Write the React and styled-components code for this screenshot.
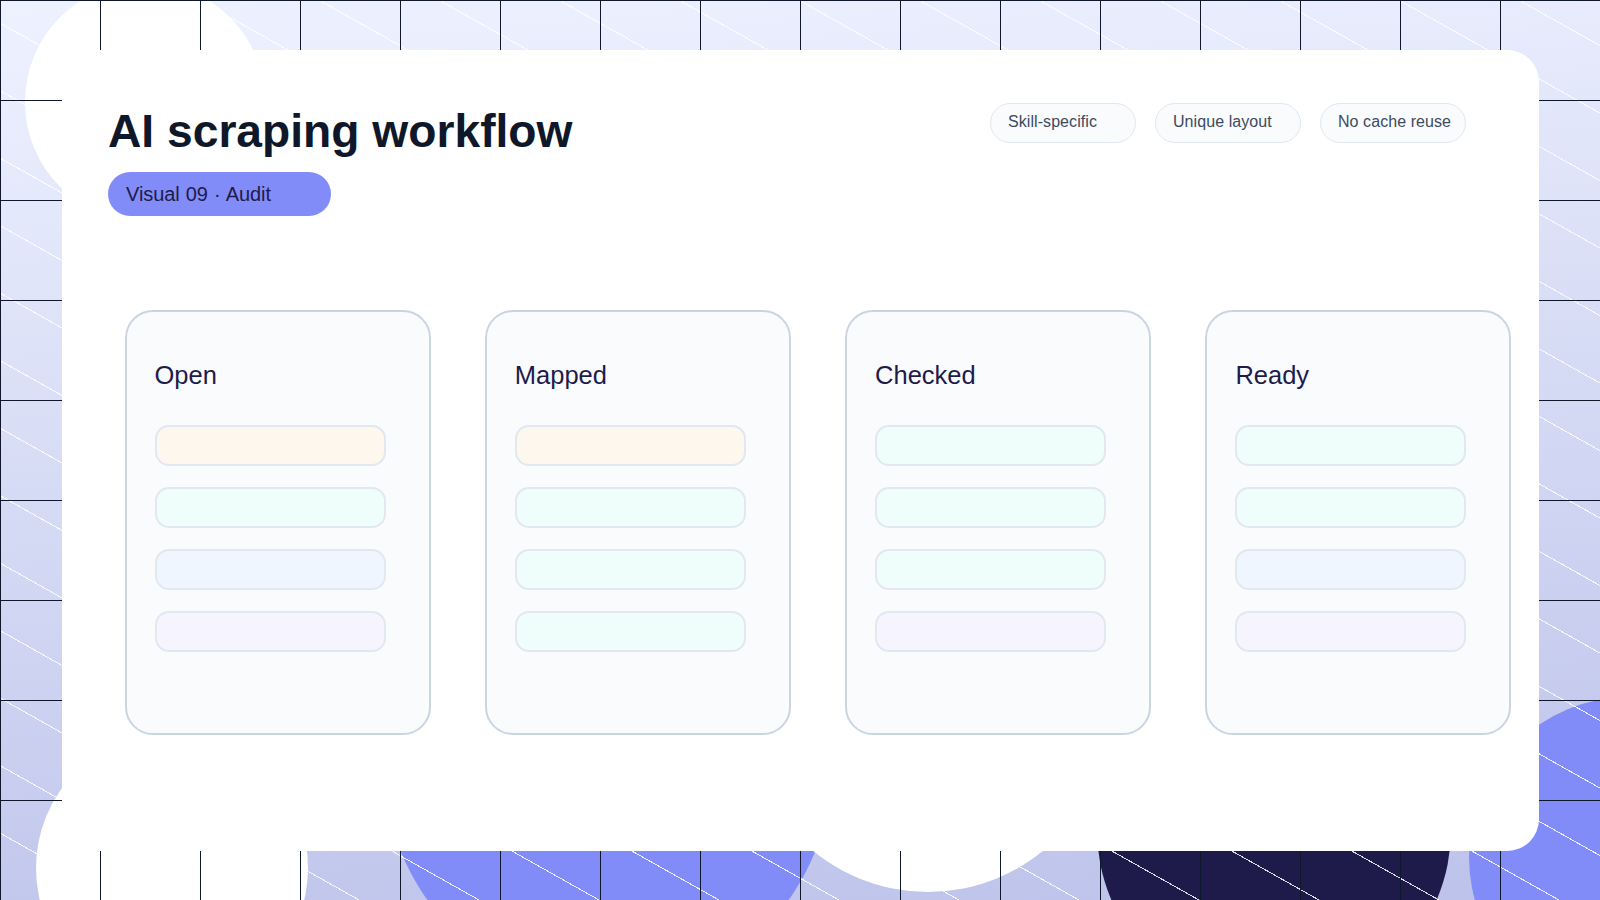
import styled, {createGlobalStyle} from "styled-components";

const GlobalStyle = createGlobalStyle`
    html, body {
        margin: 0;
        padding: 0;
    }
    body {
        font-family: "Liberation Sans", Arial, sans-serif;
    }
`

const Scene = styled.div`
    position: relative;
    width: 1600px;
    height: 900px;
    overflow: hidden;
    box-sizing: border-box;
    padding: 50px 61px 49px 62px;
    background: linear-gradient(175deg, #eef2ff 0%, #bcc2ea 100%);
`

const Circle = styled.div`
    position: absolute;
    left: ${p => p.$x - p.$r}px;
    top: ${p => p.$y - p.$r}px;
    width: ${p => p.$r * 2}px;
    height: ${p => p.$r * 2}px;
    border-radius: 50%;
    background: ${p => p.$color};
`

const Grid = styled.div`
    position: absolute;
    inset: 0;
    background-image:
        linear-gradient(#0f172a 1px, transparent 1px),
        linear-gradient(90deg, #0f172a 1px, transparent 1px),
        repeating-linear-gradient(to top right, transparent 0, transparent 57.83px, rgba(255, 255, 255, 0.85) 57.83px, rgba(255, 255, 255, 0.85) 58.83px);
    background-size: 100px 100px, 100px 100px, auto;
`

const Board = styled.main`
    position: relative;
    box-sizing: border-box;
    height: 801px;
    padding: 54px 0 0 46px;
    background: #ffffff;
    border-radius: 32px;
`

const Header = styled.header`
    display: flex;
    justify-content: space-between;
    align-items: flex-start;
    padding-right: 73px;
`

const Title = styled.h1`
    margin: 0;
    font-size: 46.2px;
    line-height: 54px;
    font-weight: 700;
    color: #0f172a;
`

const Badge = styled.div`
    box-sizing: border-box;
    width: 223px;
    height: 44px;
    margin-top: 14px;
    padding-left: 18px;
    border-radius: 22px;
    background: #818cf8;
    color: #1e1b4b;
    font-size: 20px;
    line-height: 44px;
    letter-spacing: -0.08px;
    word-spacing: 0.7px;
`

const Chips = styled.div`
    display: flex;
    gap: 19px;
    margin-top: -1px;
`

const Chip = styled.div`
    box-sizing: border-box;
    width: 146px;
    height: 40px;
    padding-left: 17px;
    border: 1px solid #e2e8f0;
    border-radius: 20px;
    background: #f9fbfd;
    color: #3d4a5e;
    font-size: 16px;
    line-height: 36px;
    letter-spacing: 0.07px;
`

const Columns = styled.section`
    display: flex;
    gap: 54.3px;
    margin: 94px 0 0 16.5px;
`

const Column = styled.article`
    box-sizing: border-box;
    width: 306px;
    height: 425px;
    padding: 46px 0 0 28px;
    border: 2px solid #cbd5e1;
    border-radius: 28px;
    background: #f9fbfd;
`

const ColumnTitle = styled.h2`
    margin: 0 0 33px;
    font-size: 25.5px;
    line-height: 34px;
    font-weight: 400;
    color: #1e1b4b;
`

const Rows = styled.div`
    display: flex;
    flex-direction: column;
    gap: 21px;
`

const Row = styled.div`
    box-sizing: border-box;
    width: 231px;
    height: 41px;
    border: 2px solid #e2e8f0;
    border-radius: 14px;
    background: ${p => p.$tint};
`

const tints = {
    amber: "#fef7ed",
    green: "#effefb",
    blue: "#eff6ff",
    violet: "#f6f4ff",
}

const columns = [
    {name: "Open", rows: ["amber", "green", "blue", "violet"]},
    {name: "Mapped", rows: ["amber", "green", "green", "green"]},
    {name: "Checked", rows: ["green", "green", "green", "violet"]},
    {name: "Ready", rows: ["green", "green", "blue", "violet"]},
];

const circles = [
    {x: 145, y: 102, r: 120, color: "#ffffff"},
    {x: 172, y: 868, r: 136, color: "#ffffff"},
    {x: 608, y: 769, r: 223, color: "#818cf8"},
    {x: 928, y: 711, r: 181, color: "#ffffff"},
    {x: 1274, y: 830, r: 177, color: "#1e1b4b"},
    {x: 1629, y: 857, r: 160, color: "#818cf8"},
];

export default function App() {
    return <Scene>
        <GlobalStyle />
        {circles.map(c => <Circle key={c.x} $x={c.x} $y={c.y} $r={c.r} $color={c.color} />)}
        <Grid />
        <Board>
            <Header>
                <div>
                    <Title>AI scraping workflow</Title>
                    <Badge>Visual 09 · Audit</Badge>
                </div>
                <Chips>
                    <Chip>Skill-specific</Chip>
                    <Chip>Unique layout</Chip>
                    <Chip>No cache reuse</Chip>
                </Chips>
            </Header>
            <Columns>
                {columns.map(col => <Column key={col.name}>
                    <ColumnTitle>{col.name}</ColumnTitle>
                    <Rows>
                        {col.rows.map((tint, i) => <Row key={i} $tint={tints[tint]} />)}
                    </Rows>
                </Column>)}
            </Columns>
        </Board>
    </Scene>
}
